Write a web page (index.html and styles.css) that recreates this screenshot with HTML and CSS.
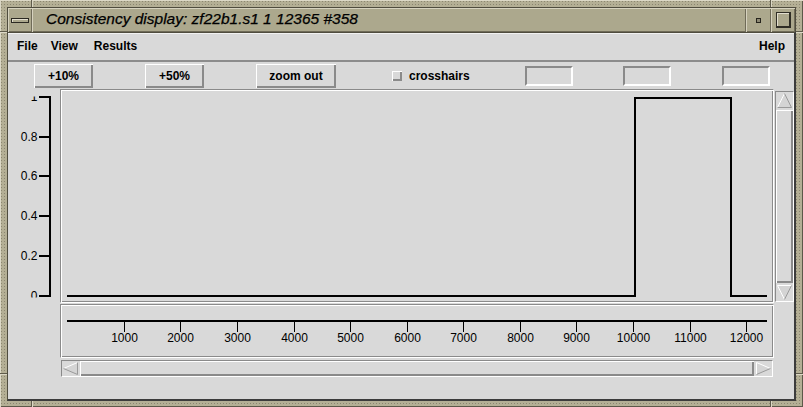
FILE: index.html
```html
<!DOCTYPE html>
<html lang="en">
<head>
<meta charset="utf-8">
<title>Consistency display</title>
<link rel="stylesheet" href="styles.css">
</head>
<body>
<div class="frame">
  <span class="notch notch-t1"></span>
  <span class="notch notch-t2"></span>
  <span class="notch notch-b1"></span>
  <span class="notch notch-b2"></span>
  <span class="notch notch-l1"></span>
  <span class="notch notch-l2"></span>
  <span class="notch notch-r1"></span>
  <span class="notch notch-r2"></span>
  <div class="titlebar">
    <div class="tb-btn tb-menu"><span class="menu-glyph"></span></div>
    <div class="tb-title">Consistency display: zf22b1.s1 1 12365 #358</div>
    <div class="tb-btn tb-min"><span class="min-glyph"></span></div>
    <div class="tb-btn tb-max"><span class="max-glyph"></span></div>
  </div>
  <div class="client">
    <div class="menubar">
      <span class="mi mi-file">File</span>
      <span class="mi mi-view">View</span>
      <span class="mi mi-results">Results</span>
      <span class="mi mi-help">Help</span>
    </div>
    <div class="toolbar">
      <button class="pb pb-10">+10%</button>
      <button class="pb pb-50">+50%</button>
      <button class="pb pb-zoom">zoom out</button>
      <span class="toggle"><span class="cbox"></span><span class="toggle-label">crosshairs</span></span>
      <span class="tf tf-1"></span>
      <span class="tf tf-2"></span>
      <span class="tf tf-3"></span>
    </div>
    <div class="main">
      <svg class="yaxis" width="52" height="214" viewBox="0 0 52 214">
        <defs>
          <clipPath id="yclip"><rect x="0" y="7.5" width="52" height="201"/></clipPath>
        </defs>
        <g class="axis-lines">
          <path d="M42 7 V208 M31 8 H43 M31 48 H43 M31 87 H43 M31 127 H43 M31 167 H43 M31 207 H43"/>
        </g>
        <g class="axis-text" clip-path="url(#yclip)" text-anchor="end">
          <text x="29.5" y="12">1</text>
          <text x="29.5" y="52">0.8</text>
          <text x="29.5" y="91">0.6</text>
          <text x="29.5" y="131">0.4</text>
          <text x="29.5" y="171">0.2</text>
          <text x="29.5" y="211">0</text>
        </g>
      </svg>
      <div class="plot">
        <svg class="plot-svg" width="712" height="212" viewBox="0 0 712 212">
          <path class="trace" d="M6 206 H574 V8 H670 V206 H706"/>
        </svg>
      </div>
      <div class="vscroll">
        <svg class="arrow" width="17" height="17" viewBox="0 0 17 17">
          <polygon class="arrow-fill" points="8.5,1.5 15.5,15.5 1.5,15.5"/>
          <polyline class="arrow-lite" points="1.5,15.5 8.5,1.5"/>
          <polyline class="arrow-dark" points="8.5,1.5 15.5,15.5 1.5,15.5"/>
        </svg>
        <div class="slider slider-v"></div>
        <svg class="arrow" width="17" height="17" viewBox="0 0 17 17">
          <polygon class="arrow-fill" points="1.5,1.5 15.5,1.5 8.5,15.5"/>
          <polyline class="arrow-lite" points="8.5,15.5 1.5,1.5 15.5,1.5"/>
          <polyline class="arrow-dark" points="15.5,1.5 8.5,15.5"/>
        </svg>
      </div>
      <div class="xaxis">
        <svg class="xaxis-svg" width="712" height="52" viewBox="0 0 712 52">
          <path class="axis-thick" d="M6 16 H706"/>
          <path class="axis-tick" d="M63.5 17 V27 M119.5 17 V27 M176.5 17 V27 M233.5 17 V27 M289.5 17 V27 M346.5 17 V27 M402.5 17 V27 M459.5 17 V27 M515.5 17 V27 M572.5 17 V27 M629.5 17 V27 M685.5 17 V27"/>
          <g class="axis-text" text-anchor="middle">
            <text x="63.5" y="37">1000</text>
            <text x="119.5" y="37">2000</text>
            <text x="176.5" y="37">3000</text>
            <text x="233.5" y="37">4000</text>
            <text x="289.5" y="37">5000</text>
            <text x="346.5" y="37">6000</text>
            <text x="402.5" y="37">7000</text>
            <text x="459.5" y="37">8000</text>
            <text x="515.5" y="37">9000</text>
            <text x="572.5" y="37">10000</text>
            <text x="629.5" y="37">11000</text>
            <text x="685.5" y="37">12000</text>
          </g>
        </svg>
      </div>
      <div class="hscroll">
        <svg class="arrow" width="17" height="15" viewBox="0 0 17 15">
          <polygon class="arrow-fill" points="1.5,7.5 15.5,1.5 15.5,13.5"/>
          <polyline class="arrow-lite" points="15.5,1.5 1.5,7.5"/>
          <polyline class="arrow-dark" points="1.5,7.5 15.5,13.5 15.5,1.5"/>
        </svg>
        <div class="slider slider-h"></div>
        <svg class="arrow" width="17" height="15" viewBox="0 0 17 15">
          <polygon class="arrow-fill" points="1.5,1.5 15.5,7.5 1.5,13.5"/>
          <polyline class="arrow-lite" points="1.5,13.5 1.5,1.5 15.5,7.5"/>
          <polyline class="arrow-dark" points="15.5,7.5 1.5,13.5"/>
        </svg>
      </div>
    </div>
  </div>
</div>
</body>
</html>
```

FILE: styles.css
```css
* { box-sizing: border-box; }

html, body {
  margin: 0;
  padding: 0;
}

body {
  width: 803px;
  height: 407px;
  overflow: hidden;
  font-family: "Liberation Sans", Arial, Helvetica, sans-serif;
  background: #b1ac92;
}

/* ---------- window manager frame ---------- */
.frame {
  position: relative;
  width: 803px;
  height: 407px;
  padding: 7px 7px 6px 7px;
  display: flex;
  flex-direction: column;
  background-color: #b4af95;
  background-image: radial-gradient(circle, #8b8670 0.7px, transparent 1px);
  background-size: 3px 3px;
  box-shadow: inset 1px 1px 0 #dcd8c6, inset -1px -1px 0 #5c5849;
}

.notch {
  position: absolute;
  background: #5f5b4b;
}
.notch-t1 { left: 31px; top: 0; width: 1px; height: 7px; box-shadow: 1px 0 0 #dcd8c6; }
.notch-t2 { left: 770px; top: 0; width: 1px; height: 7px; box-shadow: 1px 0 0 #dcd8c6; }
.notch-b1 { left: 31px; bottom: 0; width: 1px; height: 6px; box-shadow: 1px 0 0 #dcd8c6; }
.notch-b2 { left: 770px; bottom: 0; width: 1px; height: 6px; box-shadow: 1px 0 0 #dcd8c6; }
.notch-l1 { left: 0; top: 31px; width: 7px; height: 1px; box-shadow: 0 1px 0 #dcd8c6; }
.notch-l2 { left: 0; top: 373px; width: 7px; height: 1px; box-shadow: 0 1px 0 #dcd8c6; }
.notch-r1 { right: 0; top: 31px; width: 7px; height: 1px; box-shadow: 0 1px 0 #dcd8c6; }
.notch-r2 { right: 0; top: 373px; width: 7px; height: 1px; box-shadow: 0 1px 0 #dcd8c6; }

.titlebar {
  flex: none;
  height: 25px;
  display: flex;
  background: #aca88d;
  border: 1px solid #4f4c3e;
  border-bottom: 0;
}

.tb-btn {
  flex: none;
  display: flex;
  align-items: center;
  justify-content: center;
  box-shadow: inset 1px 1px 0 #d6d2bf, inset -1px -1px 0 #6f6b58;
}
.tb-menu { width: 24px; }
.tb-min { width: 25px; }
.tb-max { width: 24px; }

.menu-glyph {
  width: 18px;
  height: 5px;
  border: 1px solid #2b2922;
  background: #aca88d;
  box-shadow: inset 1px 1px 0 #e2dece;
  margin-top: 1px;
}

.min-glyph {
  width: 5px;
  height: 5px;
  border: 1px solid #26241d;
  background: #8d8974;
  margin-top: 1px;
}

.max-glyph {
  width: 15px;
  height: 16px;
  border: 1px solid #2f2d25;
  border-right-width: 2px;
  border-bottom-width: 2px;
  box-shadow: inset 1px 1px 0 #e2dece;
}

.tb-title {
  flex: 1;
  padding-left: 14px;
  font-style: italic;
  font-size: 15.5px;
  line-height: 22px;
  color: #000;
  -webkit-text-stroke: 0.25px #000;
  white-space: nowrap;
  box-shadow: inset 1px 1px 0 #d6d2bf, inset -1px -1px 0 #6f6b58;
}

/* ---------- application client area ---------- */
.client {
  flex: 1;
  display: flex;
  flex-direction: column;
  background: #d9d9d9;
  border-top: 1px solid #4f4c3e;
  border-left: 1px solid #4f4c3e;
  border-right: 2px solid #3c3c3c;
  border-bottom: 2px solid #3c3c3c;
}

.menubar {
  flex: none;
  height: 29px;
  display: flex;
  align-items: center;
  padding: 0 9px 2px 9px;
  border-bottom: 2px solid #8c8c8c;
  box-shadow: inset 0 1px 0 #f2f2f2;
}

.mi {
  font-size: 12px;
  font-weight: bold;
  color: #000;
}
.mi-view { margin-left: 13px; }
.mi-results { margin-left: 16px; }
.mi-help { margin-left: auto; }

.toolbar {
  flex: none;
  height: 27px;
  display: flex;
  align-items: center;
  padding: 1px 0 0 26px;
}

.pb {
  flex: none;
  height: 24px;
  padding: 0;
  margin: 0;
  border: 0;
  background: #d9d9d9;
  font-family: "Liberation Sans", Arial, Helvetica, sans-serif;
  font-size: 12px;
  font-weight: bold;
  color: #000;
  box-shadow: inset 1px 1px 0 #ffffff, inset -2px -2px 0 #8a8a8a;
}
.pb-10 { width: 59px; }
.pb-50 { width: 59px; margin-left: 52px; }
.pb-zoom { width: 80px; margin-left: 52px; }

.toggle {
  display: flex;
  align-items: center;
  margin-left: 56px;
}
.cbox {
  width: 10px;
  height: 10px;
  background: #d9d9d9;
  box-shadow: inset 1px 1px 0 #ffffff, inset -2px -2px 0 #8a8a8a;
  margin-right: 7px;
}
.toggle-label {
  font-size: 12px;
  font-weight: bold;
  color: #000;
}

.tf {
  flex: none;
  width: 48px;
  height: 20px;
  border: 2px solid;
  border-color: #8a8a8a #ffffff #ffffff #8a8a8a;
  background: #d9d9d9;
}
.tf-1 { margin-left: 55px; }
.tf-2 { margin-left: 50px; }
.tf-3 { margin-left: 51px; }

/* ---------- plot region ---------- */
.main {
  flex: 1;
  display: grid;
  grid-template-columns: 52px 714px 20px;
  grid-template-rows: 214px 55px 19px 1fr;
}

.yaxis {
  display: block;
  grid-column: 1;
  grid-row: 1;
}

.axis-lines path {
  fill: none;
  stroke: #000;
  stroke-width: 2;
}

.axis-text {
  font-family: "Liberation Sans", Arial, Helvetica, sans-serif;
  font-size: 12px;
  fill: #000;
}

.etched {
  border: 1px solid;
}

.plot,
.xaxis {
  border: 1px solid;
  border-color: #8a8a8a #ffffff #ffffff #8a8a8a;
  box-shadow: inset 1px 1px 0 #ffffff, inset -1px -1px 0 #8a8a8a;
}

.plot {
  grid-column: 2;
  grid-row: 1;
}

.plot-svg,
.xaxis-svg {
  display: block;
}

.trace {
  fill: none;
  stroke: #000;
  stroke-width: 2;
}

.xaxis {
  grid-column: 2;
  grid-row: 2;
  height: 54px;
  align-self: end;
}

.axis-thick {
  fill: none;
  stroke: #000;
  stroke-width: 2;
}
.axis-tick {
  fill: none;
  stroke: #000;
  stroke-width: 1;
}

/* ---------- scrollbars ---------- */
.vscroll,
.hscroll {
  display: flex;
  border: 1px solid;
  border-color: #8a8a8a #ffffff #ffffff #8a8a8a;
  background: #d9d9d9;
}

.vscroll {
  grid-column: 3;
  grid-row: 1;
  justify-self: end;
  align-self: start;
  width: 19px;
  height: 211px;
  margin-top: 2px;
  flex-direction: column;
}

.hscroll {
  grid-column: 2;
  grid-row: 3;
  align-self: start;
  width: 712px;
  height: 17px;
  margin: 2px 0 0 1px;
  flex-direction: row;
}

.arrow {
  display: block;
  flex: none;
}
.arrow-fill { fill: #d4d4d4; stroke: none; }
.arrow-lite { fill: none; stroke: #ffffff; stroke-width: 1; }
.arrow-dark { fill: none; stroke: #9a9a9a; stroke-width: 1; }

.slider {
  flex: 1;
  background: #d9d9d9;
  box-shadow: inset 1px 1px 0 #ffffff, inset -2px -2px 0 #8a8a8a;
}
.slider-v { margin: 1px 0; }
.slider-h { margin: 0 1px; }
```
